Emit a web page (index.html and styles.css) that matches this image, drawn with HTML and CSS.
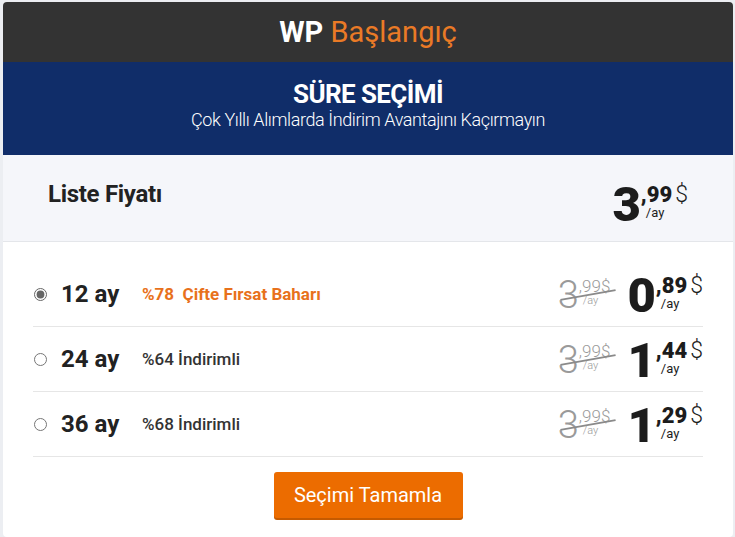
FILE: index.html
```html
<!DOCTYPE html>
<html lang="tr">
<head>
  <meta charset="UTF-8" />
  <meta name="viewport" content="width=device-width, initial-scale=1.0" />
  <title>WP Başlangıç - Süre Seçimi</title>
  <link rel="stylesheet" href="styles.css">
</head>
<body>
  <div class="card">
    <header class="plan-head">
      <h1><strong>WP</strong> <span>Başlangıç</span></h1>
    </header>

    <div class="period-head">
      <h2>SÜRE SEÇİMİ</h2>
      <p>Çok Yıllı Alımlarda İndirim Avantajını Kaçırmayın</p>
    </div>

    <div class="list-price">
      <h3>Liste Fiyatı</h3>
      <div class="price">
        <span class="int">3</span>
        <span class="dec">,99<small>/ay</small></span>
        <span class="cur">$</span>
      </div>
    </div>

    <div class="options">
      <label class="option">
        <input type="radio" name="period" checked />
        <span class="months">12 ay</span>
        <span class="deal hot">%78&nbsp; Çifte Fırsat Baharı</span>
        <span class="old-price">
          <span class="int">3</span><span class="dec">,99<small>/ay</small></span><span class="cur">$</span>
        </span>
        <span class="price">
          <span class="int">0</span>
          <span class="dec">,89<small>/ay</small></span>
          <span class="cur">$</span>
        </span>
      </label>

      <label class="option">
        <input type="radio" name="period" />
        <span class="months">24 ay</span>
        <span class="deal">%64 İndirimli</span>
        <span class="old-price">
          <span class="int">3</span><span class="dec">,99<small>/ay</small></span><span class="cur">$</span>
        </span>
        <span class="price">
          <span class="int">1</span>
          <span class="dec">,44<small>/ay</small></span>
          <span class="cur">$</span>
        </span>
      </label>

      <label class="option">
        <input type="radio" name="period" />
        <span class="months">36 ay</span>
        <span class="deal">%68 İndirimli</span>
        <span class="old-price">
          <span class="int">3</span><span class="dec">,99<small>/ay</small></span><span class="cur">$</span>
        </span>
        <span class="price">
          <span class="int">1</span>
          <span class="dec">,29<small>/ay</small></span>
          <span class="cur">$</span>
        </span>
      </label>
    </div>

    <div class="actions">
      <button>Seçimi Tamamla</button>
    </div>
  </div>
</body>
</html>
```

FILE: styles.css
```css
body {
  font-family: Roboto, "Liberation Sans", sans-serif;
  margin: 0;
  padding: 2px 2px 0 3px;
  background-color: #eceef2;
  color: #222;
}

.card {
  background-color: white;
  border-radius: 4px;
  overflow: hidden;
  height: 535px;
}

.plan-head {
  background-color: #333333;
  height: 60px;
  display: flex;
  align-items: center;
  justify-content: center;
}

.plan-head h1 {
  margin: 0;
  font-size: 29px;
  font-weight: 400;
  color: #ea7a26;
}

.plan-head strong {
  color: white;
  font-weight: 700;
}

.period-head {
  background-color: #102d69;
  height: 93px;
  color: white;
  text-align: center;
  padding-top: 18px;
  box-sizing: border-box;
}

.period-head h2 {
  margin: 0;
  font-size: 26px;
  font-weight: 700;
  letter-spacing: -0.6px;
  line-height: 29px;
}

.period-head p {
  margin: 0;
  font-size: 18px;
  font-weight: 300;
  letter-spacing: -0.4px;
  line-height: 22px;
}

.list-price {
  background-color: #f5f6fa;
  border-bottom: 1px solid #e4e6ea;
  height: 86px;
  display: flex;
  align-items: center;
  justify-content: space-between;
  padding: 0 45px 0 45px;
}

.list-price h3 {
  margin: 0 0 8px;
  font-size: 24px;
  font-weight: 700;
  letter-spacing: -0.3px;
}

.price {
  display: inline-flex;
  align-items: flex-start;
  color: #1c1c1c;
}

.price .int {
  font-size: 49px;
  font-weight: 900;
  line-height: 46px;
}

.price .dec {
  display: flex;
  flex-direction: column;
  font-size: 22px;
  font-weight: 900;
  line-height: 22px;
  padding-top: 2px;
}

.price .dec small {
  font-size: 13px;
  font-weight: 400;
  line-height: 13px;
  padding-left: 5px;
}

.price .cur {
  font-size: 23px;
  font-weight: 300;
  line-height: 26px;
  padding-left: 3px;
}

.list-price .price {
  margin-top: 14px;
}

.options {
  padding: 20px 30px 0 30px;
}

.option {
  display: flex;
  align-items: center;
  height: 64px;
  border-bottom: 1px solid #e6e6e6;
  cursor: pointer;
}

.option input {
  width: 13px;
  height: 13px;
  margin: 0 14px 0 1px;
  accent-color: #666;
}

.months {
  font-size: 24px;
  font-weight: 700;
  width: 81px;
  color: #222;
}

.deal {
  font-size: 17px;
  font-weight: 500;
  color: #333;
  flex: 1;
}

.deal.hot {
  color: #e8711c;
  font-weight: 700;
}

.old-price {
  position: relative;
  display: inline-flex;
  align-items: flex-start;
  color: #9a9a9a;
  margin-right: 17px;
  margin-top: 2px;
}

.old-price::after {
  content: "";
  position: absolute;
  left: 2px;
  top: 16px;
  width: 56px;
  height: 2px;
  background-color: #8a8a8a;
  transform: rotate(-10deg);
}

.old-price .int {
  font-size: 38px;
  font-weight: 300;
  line-height: 34px;
}

.old-price .dec {
  display: flex;
  flex-direction: column;
  font-size: 17px;
  font-weight: 300;
  line-height: 17px;
}

.old-price .dec small {
  font-size: 11px;
  line-height: 12px;
  padding-left: 4px;
}

.old-price .cur {
  font-size: 17px;
  font-weight: 300;
  line-height: 17px;
}

.option .price {
  margin-top: 4px;
}

.actions {
  display: flex;
  justify-content: center;
  padding-top: 15px;
}

button {
  background-color: #ec6c00;
  color: white;
  border: none;
  border-radius: 3px;
  box-shadow: 0 2px 0 #c55a00;
  width: 189px;
  height: 46px;
  font-family: Roboto, sans-serif;
  font-size: 20px;
  cursor: pointer;
}

button:hover {
  background-color: #d96300;
}
```
